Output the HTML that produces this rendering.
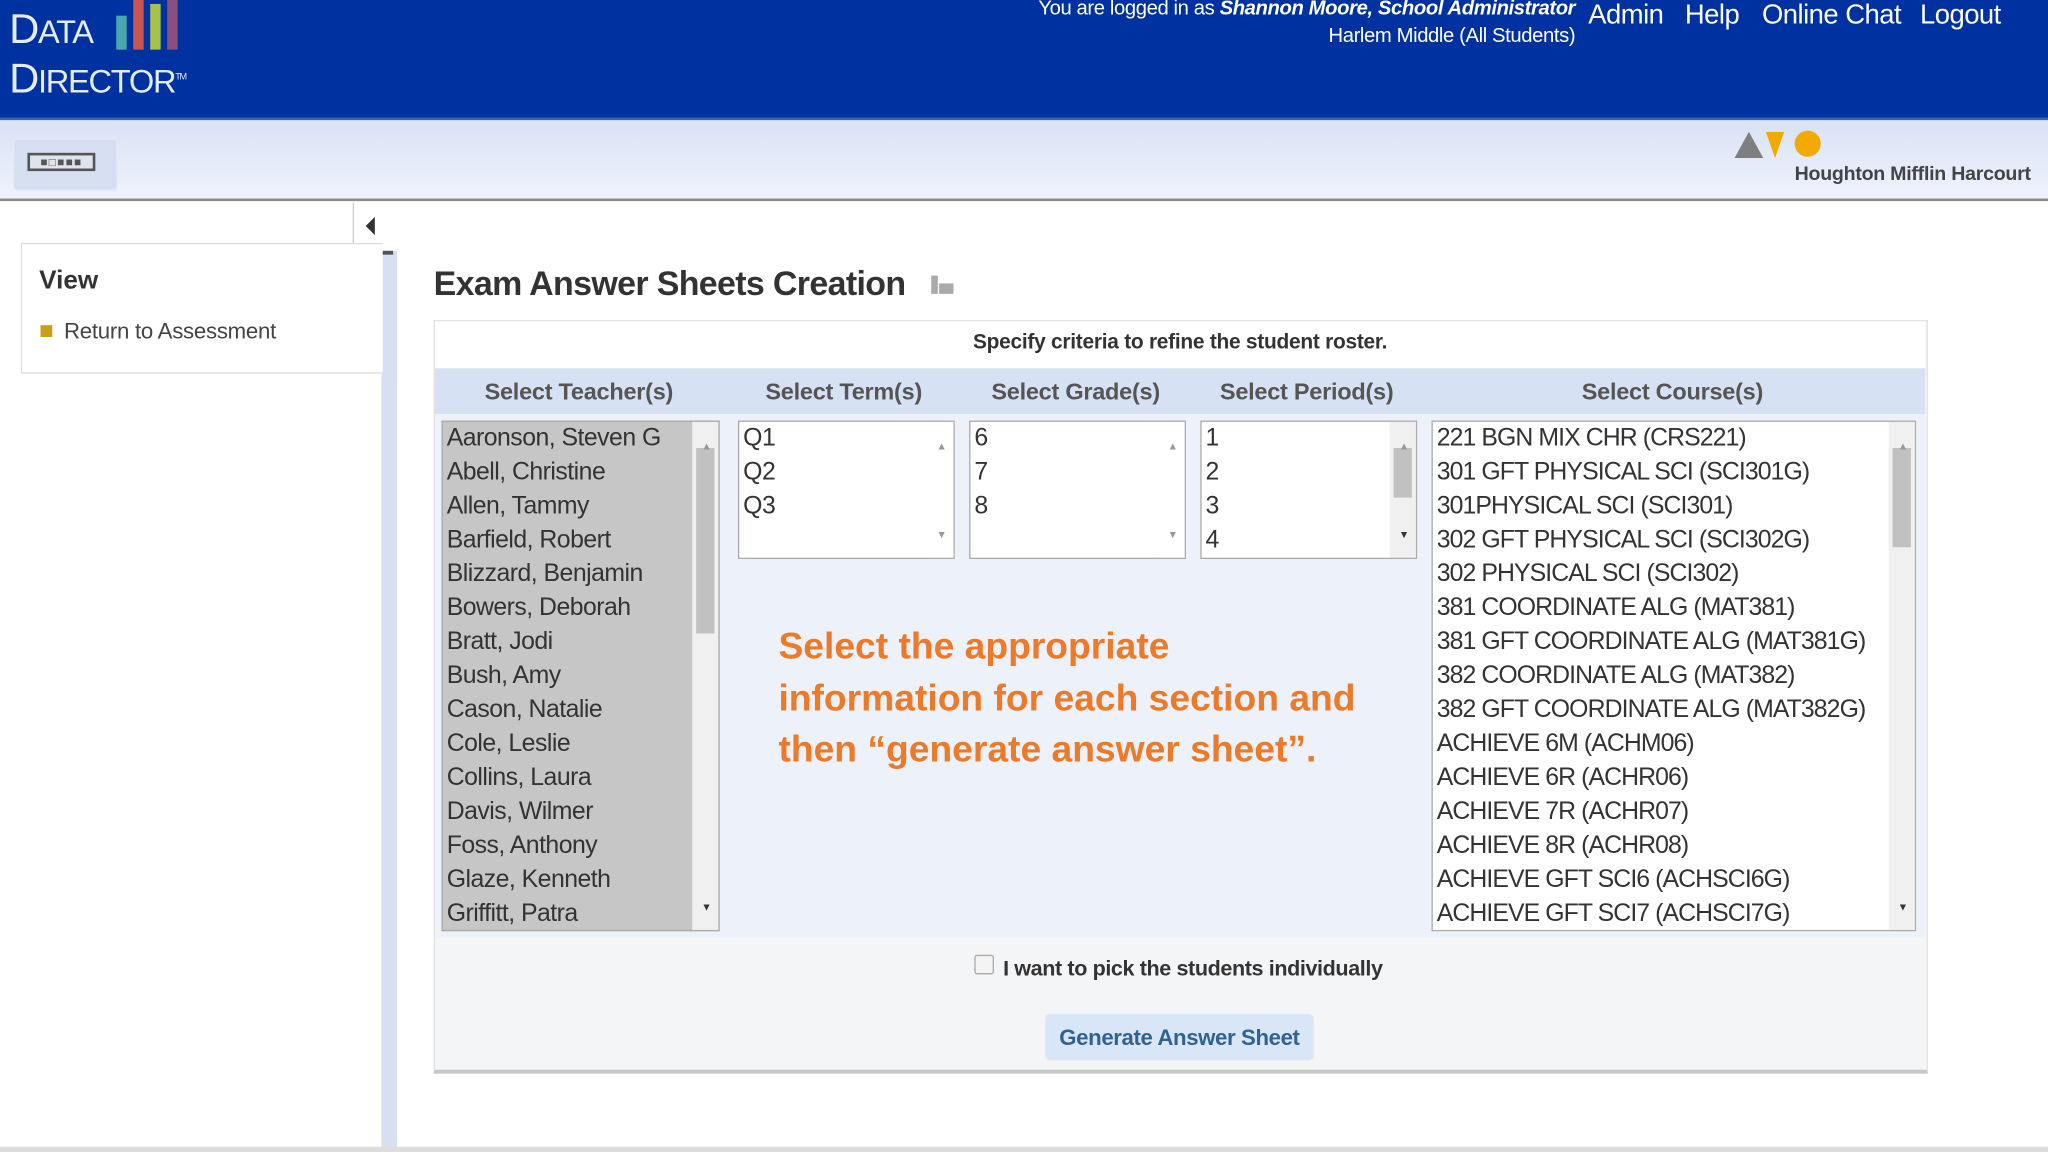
<!DOCTYPE html>
<html><head><meta charset="utf-8"><style>
html,body{margin:0;padding:0;width:2048px;height:1152px;overflow:hidden;background:#fff;font-family:"Liberation Sans",Arial,sans-serif}
#w{position:absolute;left:0;top:0;width:1568px;height:882px;transform:scale(1.306122);transform-origin:0 0;background:#fff}
.a{position:absolute}
.hdr{left:0;top:0;width:1568px;height:90px;background:#0031a0;border-bottom:2px solid #3a63c0}
.tb{left:0;top:92px;width:1568px;height:60px;background:linear-gradient(#d9e2f6,#eef2fb);border-bottom:2px solid #8c8c8c}
.nav{color:#fff;font-size:21px;top:0;letter-spacing:-0.4px}
.lst{font-size:19px;color:#333;line-height:26px;letter-spacing:-0.4px}
.lst div{padding-left:3px;white-space:nowrap}
.sb{position:absolute;right:0;top:0;bottom:0;width:17px;background:#f0f0f0}
.th{position:absolute;left:3px;width:11px;background:#c1c1c1}
.ar{position:absolute;left:4px;font-size:8px;color:#999}
.hd{top:290px;font-size:18px;font-weight:bold;color:#555;letter-spacing:-0.2px}
</style></head><body><div id="w">
<div class="a hdr"></div>
<div class="a" style="left:7px;top:6px;color:#e6ecff;font-size:32px;letter-spacing:-1px;line-height:32px">D<span style="font-size:25px">ATA</span></div>
<div class="a" style="left:7px;top:44px;color:#e6ecff;font-size:32px;letter-spacing:-1px;line-height:32px">D<span style="font-size:25px">IRECTOR</span><span style="font-size:7px;vertical-align:top">TM</span></div>
<div class="a" style="left:89px;top:12px;width:8px;height:26px;background:#4aa7b0"></div>
<div class="a" style="left:102px;top:0;width:8px;height:38px;background:#c8554f"></div>
<div class="a" style="left:115px;top:3px;width:8px;height:35px;background:#a7c24a"></div>
<div class="a" style="left:128px;top:0;width:8px;height:38px;background:#8a4f7c"></div>
<div class="a" style="right:362px;top:-4px;color:#fff;font-size:15.5px;text-align:right;line-height:21px;letter-spacing:-0.3px">You are logged in as <b><i>Shannon Moore, School Administrator</i></b><br>Harlem Middle (All Students)</div>
<div class="a nav" style="left:1216px">Admin</div>
<div class="a nav" style="left:1290px">Help</div>
<div class="a nav" style="left:1349px">Online Chat</div>
<div class="a nav" style="left:1470px">Logout</div>
<div class="a tb"></div>
<div class="a" style="left:10px;top:106px;width:78px;height:38px;background:#d6dff2;border-radius:3px;border:1px solid #e3e9f6"></div>
<div class="a" style="left:21px;top:117px;width:52px;height:14px;border:2px solid #555;background:#dfe4ec;box-sizing:border-box;font-size:9px;line-height:10px;letter-spacing:1px;color:#555;text-align:center">■□■■■</div>
<svg class="a" style="left:1328px;top:98px" width="70" height="26"><polygon points="0,23 11,3 22,23" fill="#7f7f7f"/><polygon points="24,3 38,3 31,23" fill="#f2a900"/><circle cx="56" cy="12" r="10" fill="#f2a900"/></svg>
<div class="a" style="left:1374px;top:125px;font-size:15px;font-weight:bold;color:#444;letter-spacing:-0.2px">Houghton Mifflin Harcourt</div>
<div class="a" style="left:292px;top:192px;width:12px;height:690px;background:#d6e0f0"></div>
<div class="a" style="left:270px;top:155px;width:30px;height:37px;background:#fff;border-left:1px solid #ccc;border-bottom:3px solid #555"></div>
<div class="a" style="left:280px;top:166px;width:0;height:0;border-top:7px solid transparent;border-bottom:7px solid transparent;border-right:7px solid #333"></div>
<div class="a" style="left:16px;top:186px;width:276px;height:98px;border:1px solid #ddd;border-right:none;background:#fff"></div>
<div class="a" style="left:30px;top:204px;font-size:20px;font-weight:bold;color:#333">View</div>
<div class="a" style="left:31px;top:249px;width:9px;height:9px;background:#c99d16"></div>
<div class="a" style="left:49px;top:244px;font-size:17px;color:#444;letter-spacing:-0.2px">Return to Assessment</div>
<div class="a" style="left:332px;top:202px;font-size:26px;font-weight:bold;color:#333;letter-spacing:-0.5px">Exam Answer Sheets Creation</div>
<div class="a" style="left:713px;top:211px;width:5px;height:14px;background:#aaa"></div>
<div class="a" style="left:719px;top:217px;width:11px;height:8px;background:#aaa"></div>
<div class="a" style="left:332px;top:245px;width:1142px;height:573px;border:1px solid #e2e2e2;border-bottom:3px solid #c8c8c8;background:#f4f5f7;box-sizing:content-box"></div>
<div class="a" style="left:333px;top:246px;width:1141px;height:36px;background:#fff"></div>
<div class="a" style="left:333px;top:254px;width:1141px;text-align:center;font-size:16px;font-weight:bold;color:#333;letter-spacing:-0.2px">Specify criteria to refine the student roster.</div>
<div class="a" style="left:333px;top:282px;width:1141px;height:35px;background:#d6e1f3"></div>
<div class="a" style="left:333px;top:317px;width:1141px;height:401px;background:#edf1fa"></div>
<div class="a hd" style="left:371px">Select Teacher(s)</div>
<div class="a hd" style="left:586px">Select Term(s)</div>
<div class="a hd" style="left:759px">Select Grade(s)</div>
<div class="a hd" style="left:934px">Select Period(s)</div>
<div class="a hd" style="left:1211px">Select Course(s)</div>
<div class="a lst" style="left:338px;top:322px;width:211px;height:389px;border:1px solid #aaa;background:#c6c6c6;overflow:hidden">
<div>Aaronson, Steven G</div><div>Abell, Christine</div><div>Allen, Tammy</div><div>Barfield, Robert</div><div>Blizzard, Benjamin</div><div>Bowers, Deborah</div><div>Bratt, Jodi</div><div>Bush, Amy</div><div>Cason, Natalie</div><div>Cole, Leslie</div><div>Collins, Laura</div><div>Davis, Wilmer</div><div>Foss, Anthony</div><div>Glaze, Kenneth</div><div>Griffitt, Patra</div>
<div class="sb"><div class="th" style="top:20px;height:142px"></div><div class="ar" style="top:6px">▲</div><div class="ar" style="bottom:4px;color:#333">▼</div></div></div>
<div class="a lst" style="left:565px;top:322px;width:164px;height:104px;border:1px solid #aaa;background:#fff;overflow:hidden"><div>Q1</div><div>Q2</div><div>Q3</div><div class="sb" style="background:#fff"><div class="ar" style="top:6px">▲</div><div class="ar" style="bottom:4px">▼</div></div></div>
<div class="a lst" style="left:742px;top:322px;width:164px;height:104px;border:1px solid #aaa;background:#fff;overflow:hidden"><div>6</div><div>7</div><div>8</div><div class="sb" style="background:#fff"><div class="ar" style="top:6px">▲</div><div class="ar" style="bottom:4px">▼</div></div></div>
<div class="a lst" style="left:919px;top:322px;width:164px;height:104px;border:1px solid #aaa;background:#fff;overflow:hidden"><div>1</div><div>2</div><div>3</div><div>4</div><div class="sb" style="background:#f0f0f0"><div class="th" style="top:20px;height:38px"></div><div class="ar" style="top:6px">▲</div><div class="ar" style="bottom:4px;color:#333">▼</div></div></div>
<div class="a lst" style="left:1096px;top:322px;width:369px;height:389px;border:1px solid #aaa;background:#fff;overflow:hidden;letter-spacing:-0.7px">
<div>221 BGN MIX CHR (CRS221)</div><div>301 GFT PHYSICAL SCI (SCI301G)</div><div>301PHYSICAL SCI (SCI301)</div><div>302 GFT PHYSICAL SCI (SCI302G)</div><div>302 PHYSICAL SCI (SCI302)</div><div>381 COORDINATE ALG (MAT381)</div><div>381 GFT COORDINATE ALG (MAT381G)</div><div>382 COORDINATE ALG (MAT382)</div><div>382 GFT COORDINATE ALG (MAT382G)</div><div>ACHIEVE 6M (ACHM06)</div><div>ACHIEVE 6R (ACHR06)</div><div>ACHIEVE 7R (ACHR07)</div><div>ACHIEVE 8R (ACHR08)</div><div>ACHIEVE GFT SCI6 (ACHSCI6G)</div><div>ACHIEVE GFT SCI7 (ACHSCI7G)</div>
<div class="sb" style="background:#f0f0f0"><div class="th" style="top:20px;height:76px"></div><div class="ar" style="top:6px">▲</div><div class="ar" style="bottom:4px;color:#333">▼</div></div></div>
<div class="a" style="left:596px;top:476px;font-size:28.5px;font-weight:bold;color:#ec7a28;line-height:39.5px;letter-spacing:0px">Select the appropriate<br>information for each section and<br>then “generate answer sheet”.</div>
<div class="a" style="left:746px;top:731px;width:13px;height:13px;border:1px solid #aaa;border-radius:2px;background:#f4f4f4"></div>
<div class="a" style="left:768px;top:733px;font-size:16.5px;font-weight:bold;color:#333;letter-spacing:-0.3px">I want to pick the students individually</div>
<div class="a" style="left:800px;top:776px;width:206px;height:36px;background:#d9e6f7;border-radius:4px;border:1px solid #e2e9f4;box-sizing:border-box;text-align:center;line-height:35px;font-size:17px;font-weight:bold;color:#2e6296;letter-spacing:-0.3px">Generate Answer Sheet</div>
<div class="a" style="left:0;top:878px;width:1568px;height:4px;background:#ddd"></div>
</div></body></html>
